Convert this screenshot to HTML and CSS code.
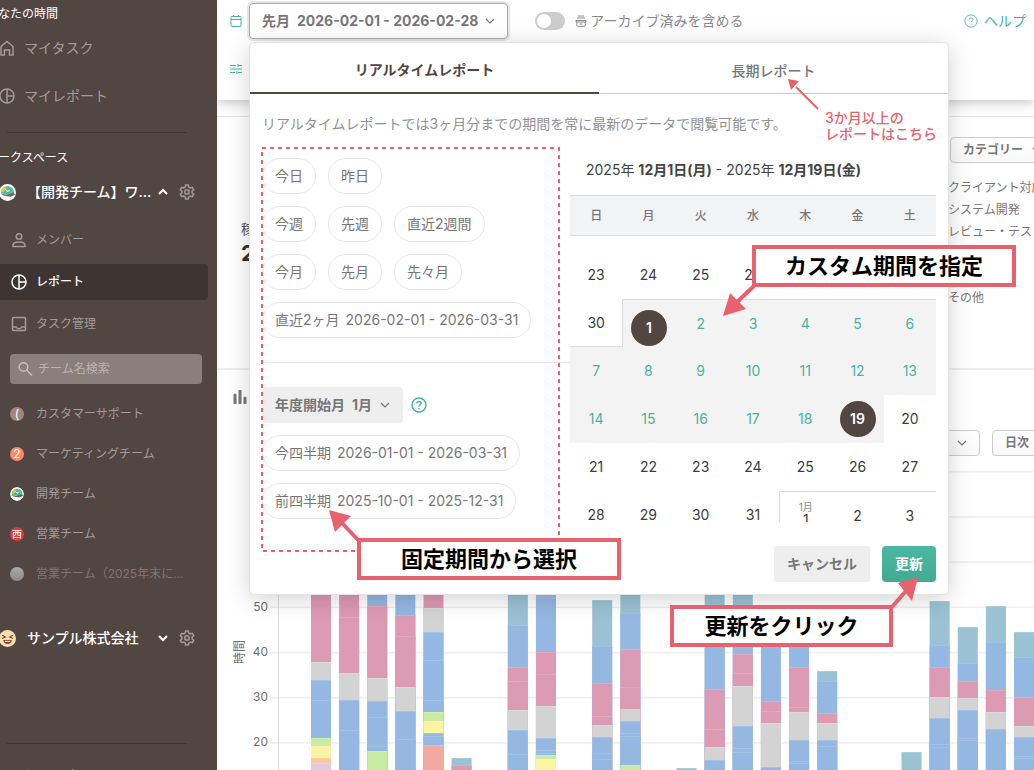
FILE: index.html
```html
<!DOCTYPE html>
<html lang="ja">
  <head>
    <meta charset="UTF-8" />
    <meta name="viewport" content="width=device-width, initial-scale=1.0" />
    <title>レポート</title>
    <link rel="stylesheet" href="styles.css">
  </head>
  <body>
    <!-- shared icons -->
    <svg class="sprite" width="0" height="0">
      <symbol id="i-pie" viewBox="0 0 16 16">
        <circle cx="8" cy="8" r="7" /><path d="M8 1v14M8 8h7" />
      </symbol>
      <symbol id="i-gear" viewBox="0 0 16 16">
        <path d="M6.6 1h2.8l.4 2.1 1.5.9 2-.7 1.4 2.4-1.6 1.4v1.8l1.6 1.4-1.4 2.4-2-.7-1.5.9-.4 2.1H6.6l-.4-2.1-1.5-.9-2 .7-1.4-2.4 1.6-1.4V7.100L1.300 5.700l1.400-2.400 2 .7 1.500-.9z" />
        <circle cx="8" cy="8" r="2.200" />
      </symbol>
      <symbol id="i-down" viewBox="0 0 10 10"><path d="M1 3l4 4 4-4" /></symbol>
      <symbol id="i-up" viewBox="0 0 10 10"><path d="M1 7l4-4 4 4" /></symbol>
      <symbol id="i-help" viewBox="0 0 16 16">
        <circle cx="8" cy="8" r="7" />
        <path d="M5.900 6.500c0-2.800 4.300-2.700 4.300-.2 0 1.500-2.100 1.600-2.100 3.100M8.100 11v1.200" />
      </symbol>
      <symbol id="i-hat" viewBox="0 0 16 16">
        <circle cx="8" cy="8" r="8" fill="#fff" />
        <path d="M2 9c0-9 12-9 12-1l-5 2z" fill="#49bd9c" />
        <path d="M2 8c0-4 2-6 5-6L5 7z" fill="#d8c64b" />
        <path d="M1 9l6 1 7-2 1 2-4 2-6-1z" fill="#66686a" />
        <path d="M6 5l2 2 2-1" fill="none" stroke="#fff" />
      </symbol>
    </svg>

    <aside class="sidebar">
      <h2 class="side-title">なたの時間</h2>
      <nav class="my-nav">
        <a href="#"><svg class="icon" viewBox="0 0 16 16"><path d="M2 6.500L8 1.500l6 5V15h-3.500v-5h-5v5H2z" /></svg>マイタスク</a>
        <a href="#"><svg class="icon"><use href="#i-pie" /></svg>マイレポート</a>
      </nav>
      <hr class="side-line">
      <h2 class="side-title">ークスペース</h2>
      <div class="workspace">
        <svg class="avatar"><use href="#i-hat" /></svg>
        <span class="ws-name">【開発チーム】ワ...</span>
        <svg class="chev"><use href="#i-up" /></svg>
        <svg class="icon"><use href="#i-gear" /></svg>
      </div>
      <nav class="sub-nav">
        <a href="#"><svg class="icon" viewBox="0 0 16 16"><circle cx="8" cy="4.500" r="2.800" /><path d="M2 14.500v-1.300c0-4.300 12-4.300 12 0v1.300z" /></svg>メンバー</a>
        <a href="#" class="active"><svg class="icon"><use href="#i-pie" /></svg>レポート</a>
        <a href="#"><svg class="icon" viewBox="0 0 16 16"><rect x="1.500" y="1.500" width="13" height="13" rx="1" /><path d="M1.500 11h3.700c1 2.200 4.600 2.200 5.600 0h3.700" /></svg>タスク管理</a>
      </nav>
      <label class="search">
        <svg class="icon" viewBox="0 0 16 16"><circle cx="6.500" cy="6" r="4.300" /><path d="M10 9.500l5 5" /></svg>
        <input type="text" placeholder="チーム名検索" aria-label="チーム名検索">
      </label>
      <nav class="teams">
        <a href="#"><span class="dot brown">(</span>カスタマーサポート</a>
        <a href="#"><span class="dot orange">2</span>マーケティングチーム</a>
        <a href="#"><svg class="dot"><use href="#i-hat" /></svg>開発チーム</a>
        <a href="#"><span class="dot red">西</span>営業チーム</a>
        <a href="#" class="archived"><span class="dot gray"></span>営業チーム（2025年末に...</a>
      </nav>
      <div class="workspace company">
        <svg class="avatar" viewBox="0 0 16 16">
          <circle cx="8" cy="8" r="8" fill="#f5dfb0" />
          <path d="M3 5l3 1.500L3 8M13 5l-3 1.500L13 8" fill="none" stroke="#7a4433" />
          <path d="M4 9.500h8c0 5-8 5-8 0z" fill="#a33a34" /><path d="M5.500 10.200h5v1h-5z" fill="#fff" />
        </svg>
        <span class="ws-name">サンプル株式会社</span>
        <svg class="chev"><use href="#i-down" /></svg>
        <svg class="icon"><use href="#i-gear" /></svg>
      </div>
      <hr class="side-line">
      <a href="#" class="settings">個人設定</a>
    </aside>

    <main class="main">
      <header class="toolbar">
        <div class="toolbar-row">
          <svg class="tool-icon" viewBox="0 0 12 12"><rect x="1" y="1.500" width="10" height="10" rx="1" /><path d="M1 4.500h10M3.500 0v2M8.500 0v2" /></svg>
          <div class="period">
            <button type="button" class="period-btn">先月<span>2026-02-01 - 2026-02-28</span><svg class="chev"><use href="#i-down" /></svg></button>

            <div class="popover">
              <div class="tabs" role="tablist">
                <button type="button" role="tab" class="tab selected">リアルタイムレポート</button>
                <button type="button" role="tab" class="tab">長期レポート</button>
              </div>
              <p class="lead">リアルタイムレポートでは3ヶ月分までの期間を常に最新のデータで閲覧可能です。</p>
              <div class="columns">
                <div class="presets">
                  <div class="pill-row">
                    <button type="button" class="pill">今日</button>
                    <button type="button" class="pill">昨日</button>
                  </div>
                  <div class="pill-row">
                    <button type="button" class="pill">今週</button>
                    <button type="button" class="pill">先週</button>
                    <button type="button" class="pill">直近2週間</button>
                  </div>
                  <div class="pill-row">
                    <button type="button" class="pill">今月</button>
                    <button type="button" class="pill">先月</button>
                    <button type="button" class="pill">先々月</button>
                  </div>
                  <div class="pill-row">
                    <button type="button" class="pill">直近2ヶ月<span>2026-02-01 - 2026-03-31</span></button>
                  </div>
                  <hr class="preset-line">
                  <div class="pill-row">
                    <div class="fiscal">
                      <label for="fiscal">年度開始月</label>
                      <select id="fiscal"><option>1月</option></select>
                      <svg class="chev"><use href="#i-down" /></svg>
                    </div>
                    <svg class="help-icon"><use href="#i-help" /></svg>
                  </div>
                  <div class="pill-row">
                    <button type="button" class="pill">今四半期<span>2026-01-01 - 2026-03-31</span></button>
                  </div>
                  <div class="pill-row">
                    <button type="button" class="pill">前四半期<span>2025-10-01 - 2025-12-31</span></button>
                  </div>
                </div>

                <div class="calendar">
                  <p class="range">2025年 <b>12月1日(月)</b> - 2025年 <b>12月19日(金)</b></p>
                  <div class="days-view">
                    <table class="days">
                      <thead>
                        <tr><th>日</th><th>月</th><th>火</th><th>水</th><th>木</th><th>金</th><th>土</th></tr>
                      </thead>
                      <tbody>
                        <tr class="spacer"><td colspan="7"></td></tr>
                        <tr><td>23</td><td>24</td><td>25</td><td>26</td><td>27</td><td>28</td><td>29</td></tr>
                        <tr>
                          <td class="before">30</td>
                          <td class="in top start"><button type="button" class="picked">1</button></td>
                          <td class="in top">2</td><td class="in top">3</td><td class="in top">4</td><td class="in top">5</td><td class="in top">6</td>
                        </tr>
                        <tr><td class="in">7</td><td class="in">8</td><td class="in">9</td><td class="in">10</td><td class="in">11</td><td class="in">12</td><td class="in">13</td></tr>
                        <tr>
                          <td class="in">14</td><td class="in">15</td><td class="in">16</td><td class="in">17</td><td class="in">18</td>
                          <td class="in"><button type="button" class="picked">19</button></td>
                          <td>20</td>
                        </tr>
                        <tr><td>21</td><td>22</td><td>23</td><td>24</td><td>25</td><td>26</td><td>27</td></tr>
                        <tr>
                          <td>28</td><td>29</td><td>30</td><td>31</td>
                          <td class="top start"><small>1月</small>1</td>
                          <td class="top">2</td><td class="top">3</td>
                        </tr>
                      </tbody>
                    </table>
                  </div>
                </div>
              </div>
              <div class="actions">
                <button type="button" class="btn">キャンセル</button>
                <button type="button" class="btn primary">更新</button>
              </div>
            </div>
          </div>
          <label class="archive">
            <input type="checkbox" class="toggle">
            <svg class="box-icon" viewBox="0 0 12 12"><path d="M3 1h6M2 3h8M1 5.500h10v1.500H1zM1.800 7v3.500c0 .5.300.8.800.8h6.800c.5 0 .8-.3.8-.8V7M4.500 9h3" /></svg>
            アーカイブ済みを含める
          </label>
          <a href="#" class="help"><svg class="help-small"><use href="#i-help" /></svg>ヘルプ</a>
        </div>
        <div class="toolbar-row filters">
          <svg class="tool-icon" viewBox="0 0 12 12"><path d="M0 2.500h6M8 2.500h4M8 1v3M0 6h3M5 6h7M4 4.500v3M0 9.500h5M8 9.500h4M7 8v3" /></svg>
        </div>
      </header>

      <section class="summary">
        <div class="total">
          <span>稼</span>
          <strong>2</strong>
        </div>
        <div class="breakdown">
          <div class="select-box">
            <select aria-label="集計単位"><option>カテゴリー</option></select>
            <svg class="chev"><use href="#i-down" /></svg>
          </div>
          <ul>
            <li>クライアント対応</li>
            <li>システム開発</li>
            <li>レビュー・テスト</li>
            <li class="last">その他</li>
          </ul>
        </div>
      </section>

      <section class="trend">
        <svg class="trend-icon" viewBox="0 0 14 14"><path d="M2 5v8M7 1v12M12 8v5" /></svg>
        <div class="trend-controls">
          <div class="select-box narrow">
            <select aria-label="表示項目"><option></option></select>
            <svg class="chev"><use href="#i-down" /></svg>
          </div>
          <div class="select-box unit">
            <select aria-label="期間の単位"><option>日次</option></select>
          </div>
        </div>
        <svg id="chart" width="817" height="300" viewBox="0 470 817 300"></svg>
      </section>
    </main>

    <!-- guide annotations -->
    <div class="guide">
      <svg class="guide-lines" width="1034" height="770">
        <rect x="262" y="148" width="297" height="403" fill="none" stroke-width="2" stroke-dasharray="4 4" />
        <path d="M754 286L736 303" stroke-width="4" /><path class="head" d="M723 316l7-23 16 16z" />
        <path d="M359 541L342 523" stroke-width="4" /><path class="head" d="M329 510l22 6-16 16z" />
        <path d="M891 608l15-17" stroke-width="4" /><path class="head" d="M918 577l-20 6 14 18z" />
        <path d="M818 109l-22-22" stroke-width="2" /><path class="head" d="M788 79l11 2-8 9z" />
      </svg>
      <p class="note">3か月以上の<br>レポートはこちら</p>
      <p class="callout custom">カスタム期間を指定</p>
      <p class="callout preset">固定期間から選択</p>
      <p class="callout update">更新をクリック</p>
    </div>

    <script src="script.js"></script>
  </body>
</html>
```

FILE: styles.css
```css
* {
  box-sizing: border-box;
}
body {
  display: flex;
  position: relative;
  height: 100vh;
  margin: 0;
  overflow: hidden;
  background: #fff;
  color: #777;
  font: 14px/20px Inter, "Noto Sans CJK JP", sans-serif;
}
p, h2, ul {
  margin: 0;
  padding: 0;
}
a {
  color: inherit;
  text-decoration: none;
}
button, select, input {
  margin: 0;
  padding: 0;
  border: 0;
  background: none;
  color: inherit;
  font: inherit;
}
select {
  appearance: none;
}
svg {
  flex: none;
  fill: none;
  stroke: currentColor;
}
.sprite {
  position: absolute;
}
.icon {
  width: 16px;
  height: 16px;
  stroke-width: 1.5;
}
.chev {
  width: 10px;
  height: 10px;
  stroke-width: 1.2;
}

/* sidebar */
.sidebar {
  display: flex;
  flex-direction: column;
  flex: none;
  width: 217px;
  padding-top: 1px;
  overflow: hidden;
  background: #524643;
  color: #a39b98;
  font-size: 12px;
}
.side-title {
  height: 24px;
  padding-top: 3px;
  margin-left: -2px;
  color: #fff;
  font-size: 12px;
  font-weight: 400;
}
.my-nav a {
  display: flex;
  align-items: center;
  gap: 9px;
  height: 48px;
  margin-left: -1px;
  font-size: 14px;
}
.side-line {
  flex: none;
  width: 180px;
  height: 1px;
  margin: 12px 0 12px 7px;
  border: 0;
  background: #3e3432;
}
.workspace {
  display: flex;
  align-items: center;
  flex: none;
  height: 48px;
  margin-left: -1px;
  color: #fff;
  font-size: 14px;
  font-weight: 500;
}
.workspace .avatar {
  width: 17px;
  height: 17px;
  stroke: none;
}
.workspace .ws-name {
  flex: none;
  width: 131px;
  margin-left: 11px;
  white-space: nowrap;
}
.workspace .chev {
  stroke-width: 2;
}
.workspace .icon {
  margin-left: 11px;
  color: #a39b98;
}
.sub-nav {
  display: flex;
  flex-direction: column;
  gap: 6px;
  margin-top: 6px;
}
.sub-nav a {
  display: flex;
  align-items: center;
  gap: 9px;
  height: 36px;
  width: 208px;
  padding-left: 11px;
  border-radius: 0 4px 4px 0;
}
.sub-nav .active {
  background: #3e3432;
  color: #fff;
  font-weight: 500;
}
.search {
  display: flex;
  align-items: center;
  flex: none;
  gap: 5px;
  width: 192px;
  height: 30px;
  margin: 12px 0 10px 10px;
  padding-left: 7px;
  border-radius: 4px;
  background: #8a7f7c;
  color: #c5bfbd;
}
.search input {
  width: 150px;
}
.search input::placeholder {
  color: #bbb4b2;
}
.teams a {
  display: flex;
  align-items: center;
  gap: 12px;
  height: 40px;
  padding-left: 10px;
}
.teams .archived {
  color: #7f7572;
}
.dot {
  flex: none;
  width: 14px;
  height: 14px;
  border-radius: 50%;
  color: #fff;
  line-height: 14px;
  text-align: center;
  stroke: none;
}
.dot.brown {
  background: #a1887f;
}
.dot.orange {
  background: #ff8a65;
}
.dot.red {
  background: #e53935;
  font-size: 10px;
}
.dot.gray {
  background: linear-gradient(#aaa, #8d8988);
}
.company {
  margin-top: 20px;
  margin-bottom: 69px;
}
.settings {
  margin-left: 24px;
  padding-top: 10px;
  font-size: 14px;
}

/* toolbar */
.main {
  flex: 1;
  min-width: 0;
  overflow: hidden;
}
.toolbar {
  position: relative;
  z-index: 1;
  height: 100px;
  background: #fff;
  box-shadow: 0 2px 12px rgba(0, 0, 0, 0.25);
}
.toolbar-row {
  display: flex;
  align-items: center;
  height: 42px;
  padding: 0 8px 0 13px;
}
.filters {
  height: 54px;
}
.tool-icon {
  width: 12px;
  height: 12px;
  color: #47b59e;
}
.period {
  position: relative;
  margin-left: 7px;
}
.period-btn {
  display: flex;
  align-items: center;
  gap: 7px;
  height: 36px;
  padding: 0 12px;
  border: 1px solid #aaa;
  border-radius: 4px;
  box-shadow: 0 0 0 2px #e6e6e6;
  font-weight: 700;
  white-space: nowrap;
}
.archive {
  display: flex;
  align-items: center;
  margin-left: 27px;
  color: #8a8a8a;
  white-space: nowrap;
}
.toggle {
  appearance: none;
  width: 30px;
  height: 18px;
  border-radius: 9px;
  background: #ccc;
}
.toggle::before {
  content: "";
  display: block;
  width: 14px;
  height: 14px;
  margin: 2px;
  border-radius: 50%;
  background: #fff;
}
.box-icon {
  width: 12px;
  height: 12px;
  margin: 0 3px 0 10px;
}
.help {
  display: flex;
  align-items: center;
  gap: 6px;
  margin-left: auto;
  color: #47b59e;
}
.help-small {
  width: 14px;
  height: 14px;
}

/* period popover */
.popover {
  position: absolute;
  top: 39px;
  left: 0;
  width: 700px;
  border: 1px solid #e4e4e4;
  border-radius: 5px;
  background: #fff;
  box-shadow: 0 4px 24px rgba(0, 0, 0, 0.18);
}
.tabs {
  display: flex;
}
.tab {
  flex: 1;
  height: 51px;
  padding-top: 5px;
  border-bottom: 1px solid #ccc;
  font-weight: 500;
}
.tab.selected {
  border-bottom: 2px solid #524643;
  color: #524643;
  font-weight: 700;
}
.lead {
  margin: 20px 12px 24px;
  color: #929292;
  white-space: nowrap;
}
.columns {
  display: grid;
  grid-template-columns: 1fr 366px;
  margin: 0 12px;
}
.presets {
  display: flex;
  flex-direction: column;
  gap: 12px;
}
.pill-row {
  display: flex;
  align-items: center;
  gap: 12px;
}
.pill {
  height: 36px;
  padding: 0 12px;
  border: 1px solid #e6e6e6;
  border-radius: 18px;
  white-space: nowrap;
}
.pill span {
  margin-left: 6px;
}
.preset-line {
  width: 100%;
  height: 1px;
  margin: 12px 0;
  border: 0;
  background: #e6e6e6;
}
.fiscal {
  display: flex;
  align-items: center;
  gap: 7px;
  height: 36px;
  padding: 0 13px;
  border-radius: 4px;
  background: #eee;
  font-weight: 700;
}
.fiscal + .help-icon {
  margin-left: -4px;
}
.help-icon {
  width: 16px;
  height: 16px;
  color: #47b59e;
  stroke-width: 1.5;
}
.range {
  height: 37px;
  padding: 2px 0 0 16px;
  color: #444;
}
.range b {
  font-weight: 700;
}
.days-view {
  height: 327px;
  overflow: hidden;
}
.days {
  width: 100%;
  border-collapse: separate;
  border-spacing: 0;
  table-layout: fixed;
  color: #3c3c3c;
  text-align: center;
}
.days th {
  height: 41px;
  padding: 0;
  border: solid #ddd;
  border-width: 1px 0;
  background: #f2f3f5;
  color: #777;
  font-size: 12px;
  font-weight: 500;
}
.days td {
  position: relative;
  height: 48px;
  padding: 0;
}
.days .spacer td {
  height: 15px;
}
.days .in {
  background: #f3f3f3;
  color: #47b59e;
}
.days .top {
  border-top: 1px solid #ddd;
}
.days .start {
  padding-top: 8px;
  border-left: 1px solid #ddd;
}
.days .before {
  border-bottom: 1px solid #ddd;
}
.days small {
  position: absolute;
  top: 5px;
  left: 0;
  width: 100%;
  color: #8a8a8a;
  font-size: 10px;
}
.picked {
  width: 36px;
  height: 36px;
  border-radius: 50%;
  background: #524643;
  color: #fff;
  font-weight: 600;
}
.actions {
  display: flex;
  justify-content: flex-end;
  gap: 12px;
  padding: 24px 12px 12px;
}
.btn {
  height: 36px;
  padding: 0 13px;
  border-radius: 4px;
  background: #eee;
  font-weight: 600;
}
.btn.primary {
  background: linear-gradient(#4cb8a2, #42aa93);
  color: #fff;
}

/* report body */
.summary {
  display: flex;
  justify-content: space-between;
  height: 254px;
  margin-top: 16px;
  border-top: 1px solid #e4e4e4;
  border-bottom: 2px solid #eee;
}
.total {
  display: flex;
  flex-direction: column;
  gap: 4px;
  padding: 102px 0 0 24px;
  color: #555;
}
.total strong {
  color: #333;
  font-size: 22px;
}
.select-box {
  display: flex;
  align-items: center;
  gap: 8px;
  height: 26px;
  padding: 0 12px;
  border: 1px solid #ccc;
  border-radius: 4px;
  background: linear-gradient(#fff, #f8f8f8);
  font-size: 12px;
  font-weight: 600;
}
.breakdown {
  width: 86px;
  padding-top: 20px;
  font-size: 12px;
  white-space: nowrap;
}
.breakdown .select-box {
  width: 110px;
  margin-left: 2px;
}
.breakdown ul {
  margin-top: 14px;
  line-height: 22px;
  list-style: none;
}
.breakdown .last {
  margin-top: 44px;
}
.trend-icon {
  display: block;
  width: 14px;
  height: 14px;
  margin: 20px 0 26px 16px;
  stroke-width: 3;
  stroke-linecap: round;
}
.trend-controls {
  display: flex;
  justify-content: flex-end;
  gap: 12px;
  height: 40px;
}
.narrow {
  justify-content: flex-end;
  width: 60px;
}
.narrow select {
  width: 20px;
}
.unit {
  width: 55px;
  margin-right: -13px;
}
#chart {
  display: block;
  stroke: none;
}
#chart text {
  fill: #707070;
  font-size: 12px;
  text-anchor: end;
}

/* guide annotations */
.guide-lines {
  position: absolute;
  z-index: 2;
  top: 0;
  left: 0;
  stroke: #e8626d;
  pointer-events: none;
}
.guide-lines .head {
  fill: #e8626d;
  stroke: none;
}
.note {
  position: absolute;
  z-index: 2;
  top: 110px;
  left: 825px;
  color: #e8626d;
  font-weight: 500;
  line-height: 16px;
}
.callout {
  position: absolute;
  z-index: 3;
  width: 264px;
  height: 42px;
  border: 4px solid #e8626d;
  background: #fff;
  color: #000;
  font-size: 22px;
  font-weight: 700;
  line-height: 34px;
  text-align: center;
}
.custom {
  top: 245px;
  left: 752px;
}
.preset {
  top: 538px;
  left: 357px;
}
.update {
  top: 605px;
  left: 670px;
  width: 223px;
}
```

FILE: script.js
```js
const colors = {
  p: "#dd9ab3", g: "#d3d3d3", b: "#94b8e2", n: "#c8eca3", y: "#fbf4a3",
  o: "#fcc99b", l: "#dfc9e6", t: "#9ac2d4", s: "#f2a9a1",
};

// day slot: colour and top edge of each stacked segment
const bars = {
  0: "p580 g662 b680 b700 n738 y746 o758 l763",
  1: "p580 p617 g673 b700 b730",
  2: "b580 p606 g678 b701 b717 b746 n751",
  3: "b580 p615 p636 g687 b711 b739",
  4: "p580 g608 b632 b660 b700 n712 y721 b733 b736 s745",
  5: "t758 p765",
  7: "t580 b625 p667 p681 g710 b730 b754",
  8: "t580 b598 p652 p674 g706 b738 b750 b753 n755 y759",
  10: "t600 b646 p683 p716 g725 b737 b753 b759",
  11: "t580 b613 p649 p687 g709 b721 b733 b736 n765",
  13: "t768",
  14: "t580 b610 p689 p729 g747 b760",
  15: "t580 b610 p654 p673 g686 b726 b748 b752",
  16: "b620 p701 p711 g723 b767",
  17: "b620 p667 p707 g712 b740 b761 b763",
  18: "t671 b681 p713 g723 b740 b746",
  21: "t752",
  22: "t601 b645 p667 g697 b718 b744 b747",
  23: "t627 b663 p681 g698 b710 b738 b740",
  24: "t606 b642 p690 g712 b729",
  25: "t632 b657 p697 g726 b737 b756 b758",
};

let out = "";
for (let y = 471; y < 760; y += 45.2) {
  out += `<rect x="53" y="${y}" width="764" height="1.500" fill="#eee"/>`;
}
out += '<rect x="61" y="470" width="1" height="300" fill="#ddd"/>';
[50, 40, 30, 20].forEach((n, i) => {
  out += `<text x="51" y="${611 + i * 45}">${n}</text>`;
});
out += '<text transform="translate(27 640) rotate(-90)">時間</text>';

Object.entries(bars).forEach(([slot, segments]) => {
  const x = 94 + slot * 28.12;
  segments.split(" ").forEach((seg) => {
    const y = Number(seg.slice(1));
    out += `<rect x="${x}" y="${y}" width="20" height="${770 - y}" fill="${colors[seg[0]]}"/>`;
    out += `<rect x="${x}" y="${y}" width="20" height="1" fill="#fff" opacity="0.15"/>`;
  });
});
document.getElementById("chart").innerHTML = out;
```
